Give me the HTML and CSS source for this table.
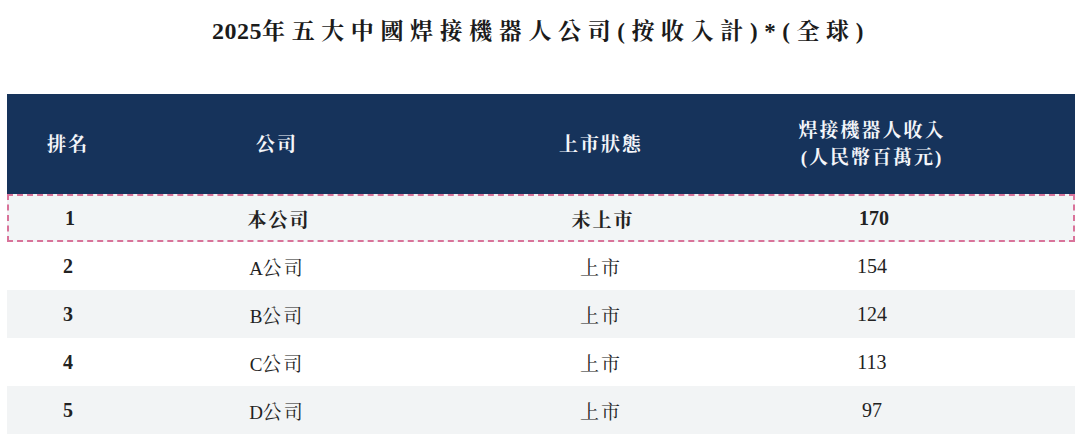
FILE: index.html
```html
<!DOCTYPE html>
<html lang="zh-Hant">
<head>
<meta charset="utf-8">
<link rel="stylesheet" href="styles.css">
</head>
<body>
<div class="page">
  <h1 class="title"><span class="year">2025</span>年五大中國焊接機器人公司(按收入計)*(全球)</h1>
  <div class="table">
    <div class="row head">
      <div class="cell c1">排名</div>
      <div class="cell c2">公司</div>
      <div class="cell c3">上市狀態</div>
      <div class="cell c4">焊接機器人收入<br>(人民幣百萬元)</div>
    </div>
    <div class="row shade highlight">
      <div class="cell c1 num">1</div>
      <div class="cell c2">本公司</div>
      <div class="cell c3">未上市</div>
      <div class="cell c4 num">170</div>
    </div>
    <div class="row">
      <div class="cell c1 num">2</div>
      <div class="cell c2"><span class="latin">A</span>公司</div>
      <div class="cell c3">上市</div>
      <div class="cell c4 num">154</div>
    </div>
    <div class="row shade">
      <div class="cell c1 num">3</div>
      <div class="cell c2"><span class="latin">B</span>公司</div>
      <div class="cell c3">上市</div>
      <div class="cell c4 num">124</div>
    </div>
    <div class="row">
      <div class="cell c1 num">4</div>
      <div class="cell c2"><span class="latin">C</span>公司</div>
      <div class="cell c3">上市</div>
      <div class="cell c4 num">113</div>
    </div>
    <div class="row shade">
      <div class="cell c1 num">5</div>
      <div class="cell c2"><span class="latin">D</span>公司</div>
      <div class="cell c3">上市</div>
      <div class="cell c4 num">97</div>
    </div>
  </div>
</div>
</body>
</html>
```

FILE: styles.css
```css
html, body {
  margin: 0;
  padding: 0;
  background: #ffffff;
}
body {
  font-family: "Liberation Serif", "Noto Serif CJK TC", "Noto Sans CJK TC", serif;
  color: #222222;
}
.page {
  width: 1080px;
  height: 437px;
  padding: 0 5px 0 7px;
  box-sizing: border-box;
}
.title {
  margin: 0;
  padding-top: 17px;
  height: 94px;
  box-sizing: border-box;
  text-align: center;
  font-size: 23px;
  font-weight: bold;
  letter-spacing: 6.6px;
  line-height: 28px;
  color: #1b1b1b;
}
.year {
  letter-spacing: 0.5px;
  font-size: 24px;
}
.table {
  width: 1068px;
}
.row {
  display: grid;
  grid-template-columns: 122px 296px 352px 190px 1fr;
  height: 48px;
  align-items: center;
  font-size: 19px;
  letter-spacing: 2px;
}
.row.head {
  height: 100px;
  background: #16335b;
  color: #f4f6fa;
  font-weight: bold;
  line-height: 27px;
}
.row.shade {
  background: #f2f4f5;
}
.row.highlight {
  background: #f2f5f6;
  border: 2px dashed #d9739a;
  font-weight: bold;
  box-sizing: border-box;
}
.cell {
  text-align: center;
}
.c1 {
  font-weight: bold;
}
.latin {
  letter-spacing: 0;
}
.num {
  letter-spacing: 0;
  font-size: 20px;
}
```
